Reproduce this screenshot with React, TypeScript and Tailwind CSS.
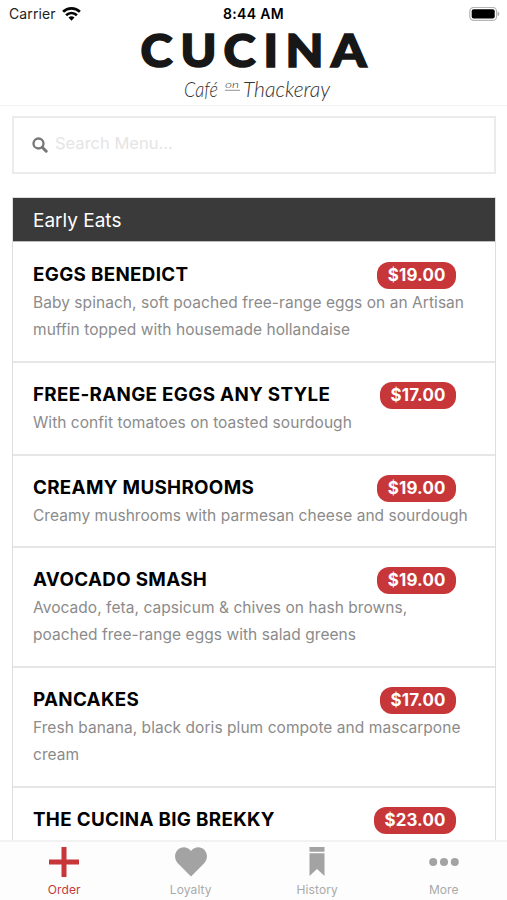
interface MenuItem {
  name: string;
  price: string;
  description: string[];
  rowClass: string;
}

const items: MenuItem[] = [
  {
    name: "EGGS BENEDICT",
    price: "$19.00",
    description: [
      "Baby spinach, soft poached free-range eggs on an Artisan",
      "muffin topped with housemade hollandaise",
    ],
    rowClass: "h-[121px] pt-5",
  },
  {
    name: "FREE-RANGE EGGS ANY STYLE",
    price: "$17.00",
    description: ["With confit tomatoes on toasted sourdough"],
    rowClass: "h-[93px] pt-[19px]",
  },
  {
    name: "CREAMY MUSHROOMS",
    price: "$19.00",
    description: ["Creamy mushrooms with parmesan cheese and sourdough"],
    rowClass: "h-[92px] pt-[19px]",
  },
  {
    name: "AVOCADO SMASH",
    price: "$19.00",
    description: [
      "Avocado, feta, capsicum & chives on hash browns,",
      "poached free-range eggs with salad greens",
    ],
    rowClass: "h-[120px] pt-[19px]",
  },
  {
    name: "PANCAKES",
    price: "$17.00",
    description: ["Fresh banana, black doris plum compote and mascarpone", "cream"],
    rowClass: "h-[120px] pt-[19px]",
  },
  {
    name: "THE CUCINA BIG BREKKY",
    price: "$23.00",
    description: [],
    rowClass: "h-[120px] pt-[19px]",
  },
];

const logoLetters = [
  { char: "C", x: 140.5, width: 32 },
  { char: "U", x: 180.5, width: 36 },
  { char: "C", x: 223.5, width: 32 },
  { char: "I", x: 263.5, width: 14.5 },
  { char: "N", x: 285.5, width: 38 },
  { char: "A", x: 331, width: 35.5 },
];

function StatusBar() {
  return (
    <div className="grid h-[28px] grid-cols-3 items-center pl-[9px] pr-[7px] text-[14px] leading-none text-[#222]">
      <div className="flex items-center gap-[6px]">
        <span className="tracking-[0.1px]">Carrier</span>
        <svg width="19" height="14" viewBox="0 0 19 14" fill="none" stroke="#050505" strokeWidth="2.7">
          <path d="M1.1 4.800a12 12 0 0 1 16.8 0" />
          <path d="M4.1 8.200a7.7 7.7 0 0 1 10.8 0" />
          <path d="M9.5 13.7 6.500 10.600a4.300 4.300 0 0 1 6 0z" fill="#050505" stroke="none" />
        </svg>
      </div>
      <div className="-ml-[2px] text-center font-semibold tracking-[0.35px] text-black">8:44 AM</div>
      <div className="flex justify-end">
        <svg width="31" height="15" viewBox="0 0 31 15">
          <rect x="0.8" y="0.4" width="26.8" height="13" rx="4" fill="#fff" stroke="#b5b5b5" strokeWidth="1.2" />
          <rect x="2.7" y="2.3" width="23" height="9.3" rx="2" fill="#000" />
          <path d="M28.7 4.700c2.200.7 2.200 3.700 0 4.400z" fill="#aaa" />
        </svg>
      </div>
    </div>
  );
}

function Logo() {
  return (
    <svg className="mx-auto block overflow-visible" width="240" height="77" viewBox="134 28 240 77">
      <g fill="#171717" stroke="#171717" strokeWidth="1.6" fontFamily="Lato, sans-serif" fontWeight="900" fontSize="45">
        {logoLetters.map(({ char, x, width }) => (
          <text key={x} x={x} y="66.5" textLength={width} lengthAdjust="spacingAndGlyphs">
            {char}
          </text>
        ))}
      </g>
      <g fill="#333" fontFamily="Lato, sans-serif" fontStyle="italic" fontWeight="300">
        <text x="184" y="97" fontSize="22" textLength="34" lengthAdjust="spacingAndGlyphs">Café</text>
        <text x="225" y="88" fontSize="10" textLength="14" lengthAdjust="spacingAndGlyphs">on</text>
        <text x="243" y="97" fontSize="22" textLength="87" lengthAdjust="spacingAndGlyphs">Thackeray</text>
      </g>
      <path d="M225 90.3h15" stroke="#777" strokeWidth="0.8" />
    </svg>
  );
}

function MenuRow({ item }: { item: MenuItem }) {
  return (
    <div className={`shrink-0 border-b-2 border-[#e6e6e6] pl-5 pr-[39px] ${item.rowClass}`}>
      <div className="flex h-[27px] items-start justify-between">
        <h3 className="mt-px text-[18.8px] font-bold leading-6 tracking-[0.32px] text-black">{item.name}</h3>
        <span className="flex h-[27px] items-center rounded-[12px] bg-[#c7373a] px-[10.5px] pt-px text-[16.9px] font-bold tracking-[0.15px] text-white">
          {item.price}
        </span>
      </div>
      <p className="whitespace-nowrap text-[15.5px] leading-[27px] tracking-[0.05px] text-[#8b8b8b]">
        {item.description.map((line) => (
          <span key={line} className="block">
            {line}
          </span>
        ))}
      </p>
    </div>
  );
}

function TabBar() {
  return (
    <nav className="grid h-[60px] shrink-0 grid-cols-4 border-t-2 border-[#f2f2f2] bg-[#fdfdfd] pl-px text-center text-[12px] leading-4 tracking-[0.1px] text-[#aaa]">
      <div className="flex flex-col items-center pt-[5px] text-[#c7373a]">
        <svg width="30" height="30" viewBox="0 0 30 30" fill="currentColor">
          <path d="M12.500 0h5v12.500H30v5H17.500V30h-5V17.500H0v-5h12.500z" />
        </svg>
        <span className="mt-[5px]">Order</span>
      </div>
      <div className="flex flex-col items-center pt-[5px]">
        <svg width="32" height="30" viewBox="0 0 32 30" fill="#a3a3a3">
          <path d="M16 29.500 2.800 16.200C-.8 12.500-.8 6.500 2.500 3 6.500-1 12.500-.5 16 4c3.500-4.500 9.500-5 13.500-1 3.300 3.500 3.300 9.500-.3 13.200z" />
        </svg>
        <span className="mt-[5px]">Loyalty</span>
      </div>
      <div className="flex flex-col items-center pt-[5px]">
        <svg width="16" height="30" viewBox="0 0 16 30" fill="#a3a3a3">
          <path d="M.5 0h15v4.800H.5zM.5 6.300h15V29L8 22 .5 29z" />
        </svg>
        <span className="mt-[5px]">History</span>
      </div>
      <div className="flex flex-col items-center pt-[5px]">
        <svg width="30" height="30" viewBox="0 0 30 30" fill="#a3a3a3">
          <circle cx="4.200" cy="15" r="4" />
          <circle cx="15" cy="15" r="4" />
          <circle cx="25.800" cy="15" r="4" />
        </svg>
        <span className="mt-[5px]">More</span>
      </div>
    </nav>
  );
}

export default function App() {
  return (
    <div className="flex h-[900px] w-[507px] flex-col overflow-hidden bg-white font-['Inter',sans-serif]">
      <header className="h-[106px] shrink-0 border-b border-[#f3f3f3]">
        <StatusBar />
        <Logo />
      </header>

      <main className="flex min-h-0 flex-1 flex-col overflow-hidden pl-3 pr-[11px] pt-[10px]">
        <div className="flex h-[58px] shrink-0 items-center border-2 border-[#ebebeb] pl-[18px]">
          <svg width="16" height="16" viewBox="0 0 16 16" fill="none" stroke="#777">
            <circle cx="6.500" cy="6.500" r="5" strokeWidth="2.300" />
            <path d="m10.200 10.200 4 4" strokeWidth="3" strokeLinecap="round" />
          </svg>
          <span className="ml-[7px] -mt-[4px] text-[16.5px] text-[#e5e5e5]">Search Menu...</span>
        </div>

        <section className="mt-[23px] flex min-h-0 flex-1 flex-col overflow-hidden border-x border-t border-[#dedede]">
          <h2 className="flex h-[44px] shrink-0 items-center border-b border-[#bbb] bg-[#3a3a3a] pl-5 pt-[3px] text-[19px] text-white">
            Early Eats
          </h2>
          {items.map((item) => (
            <MenuRow key={item.name} item={item} />
          ))}
        </section>
      </main>

      <TabBar />
    </div>
  );
}
